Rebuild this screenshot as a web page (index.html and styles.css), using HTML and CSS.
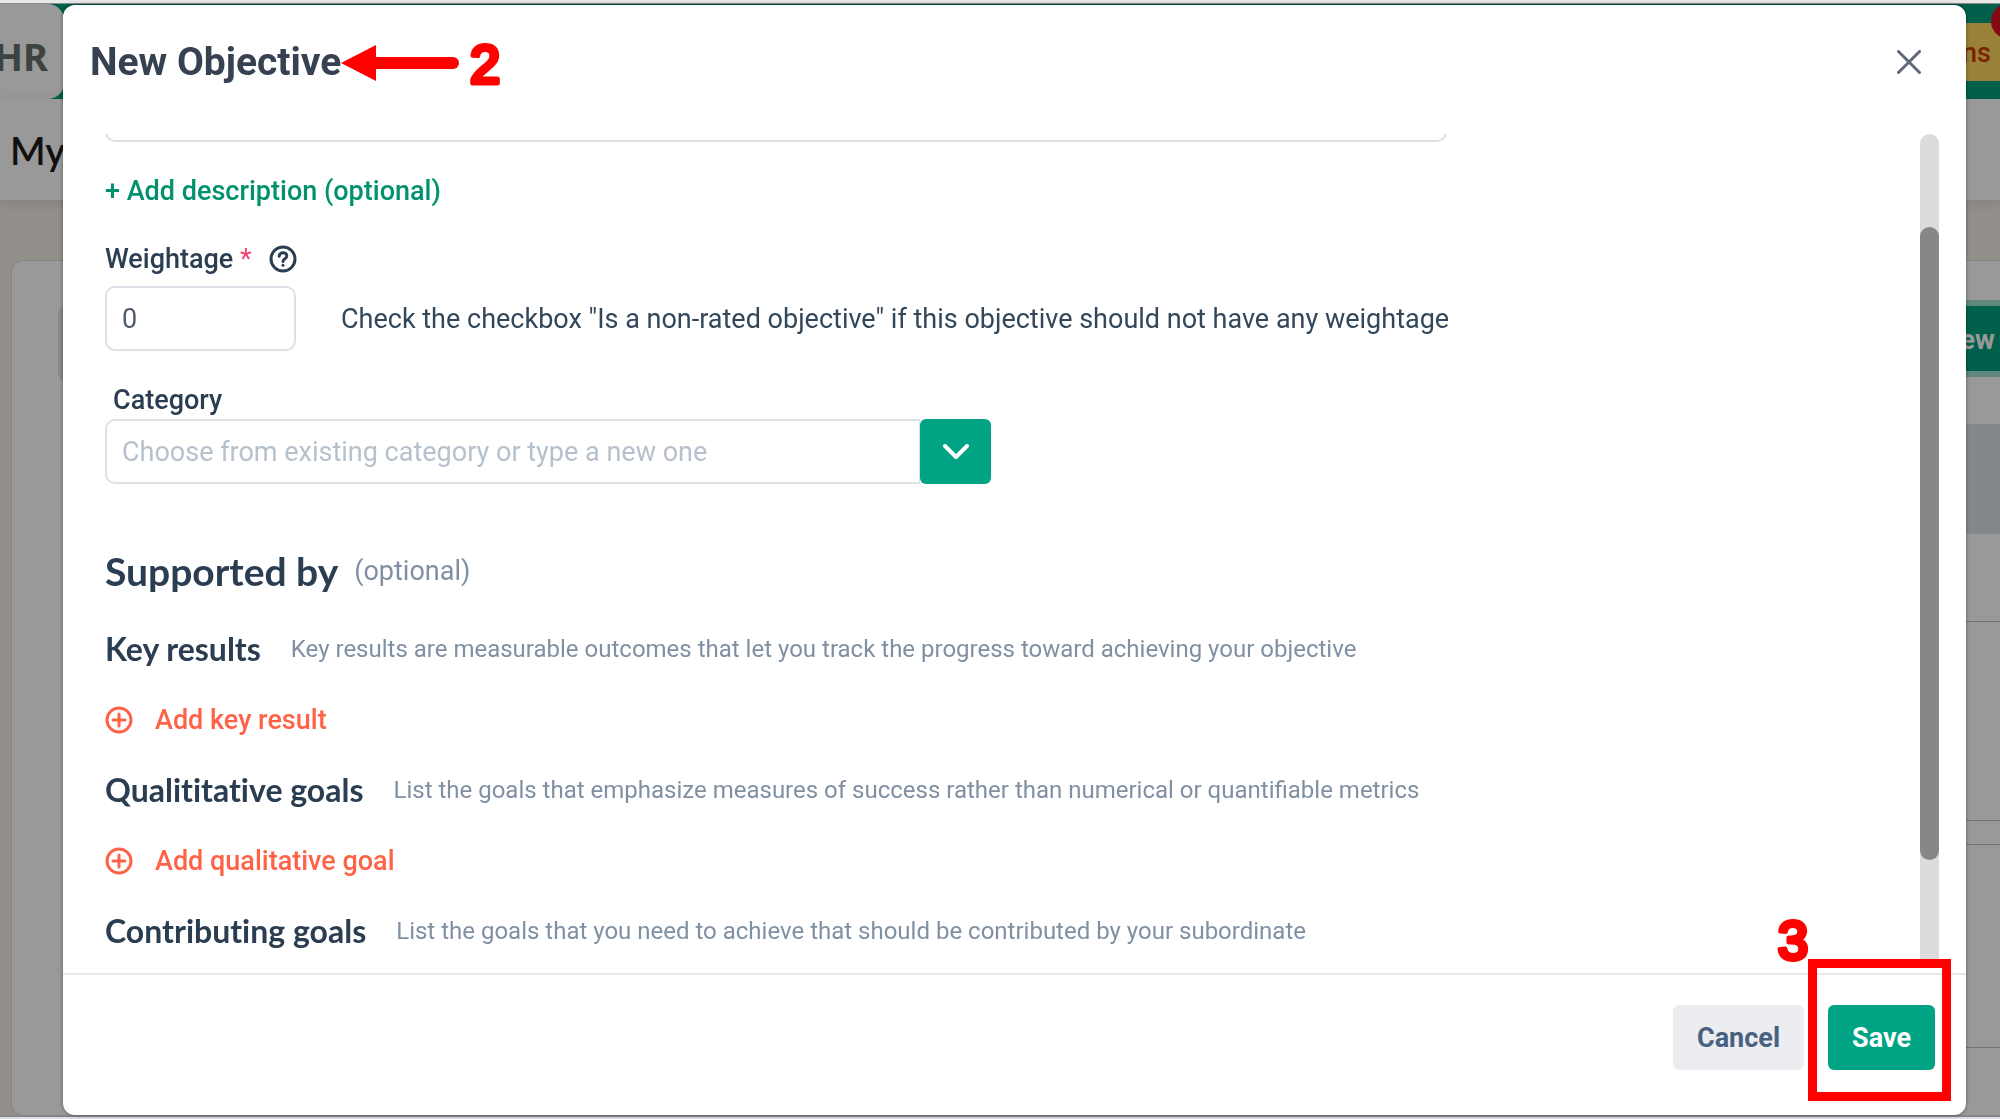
FILE: index.html
```html
<!DOCTYPE html>
<html lang="en">
<head>
<meta charset="utf-8">
<title>New Objective</title>
<meta name="viewport" content="width=device-width, initial-scale=1">
<link rel="stylesheet" href="styles.css">
</head>
<body>
<div class="app" aria-hidden="true">
  <header class="topbar">
    <div class="brand">HR</div>
    <div class="actions">Actions<span class="badge">1</span></div>
  </header>
  <div class="titlebar">My Objectives</div>
  <div class="card">
    <div class="toolbar"><span class="filter"></span><span class="new">+ New</span></div>
    <div class="thead"></div>
    <div class="line line-a"></div>
    <div class="line line-b"></div>
    <div class="line line-c"></div>
    <div class="line line-d"></div>
  </div>
</div>

<div class="backdrop">
  <section class="modal" role="dialog" aria-labelledby="dialog-title">
    <header class="modal-head">
      <div class="title-wrap">
        <h1 class="modal-title" id="dialog-title">New Objective</h1>
        <svg class="arrow" width="170" height="70" viewBox="0 0 170 70">
          <path class="arrow-fill" d="M0 30 35 12V48z"/>
          <path class="arrow-shaft" d="M34 30H112"/>
          <text class="step" x="129" y="50">2</text>
        </svg>
      </div>
      <button class="close" type="button" aria-label="Close">
        <svg width="24" height="24" viewBox="0 0 24 24"><path d="M1.500 1.500 22.500 22.500M22.500 1.500 1.500 22.500"/></svg>
      </button>
    </header>

    <div class="modal-body">
      <form class="fields" id="objective">
        <textarea class="box name" aria-label="Objective"></textarea>
        <button class="link-button" type="button">+ Add description (optional)</button>

        <div class="label-row">
          <label class="label" for="weight">Weightage <span class="required">*</span></label>
          <svg class="help" width="28" height="28" viewBox="0 0 28 28">
            <circle cx="14" cy="14" r="12"/>
            <path d="M10.200 11.300C10.200 6.500 17.800 6.700 17.800 11C17.800 13.700 14 13.700 14 16.400"/>
            <path d="M14 20.200V20.300"/>
          </svg>
        </div>
        <div class="weight-row">
          <input class="box weight" id="weight" type="text" value="0">
          <span class="hint">Check the checkbox "Is a non-rated objective" if this objective should not have any weightage</span>
        </div>

        <label class="label category-label" for="category">Category</label>
        <div class="combo">
          <input class="box category" id="category" type="text" placeholder="Choose from existing category or type a new one">
          <button class="combo-button" type="button" aria-label="Show categories">
            <svg width="28" height="18" viewBox="0 0 28 18"><path d="M3 3 14 14 25 3"/></svg>
          </button>
        </div>

        <div class="support-head"><h2 class="support-title">Supported by</h2><span class="optional">(optional)</span></div>

        <div class="goal-head"><h3 class="goal-title">Key results</h3><span class="goal-text">Key results are measurable outcomes that let you track the progress toward achieving your objective</span></div>
        <button class="add" type="button">
          <svg width="28" height="28" viewBox="0 0 28 28"><circle cx="14" cy="14" r="12"/><path d="M14 8V20M8 14H20"/></svg>Add key result
        </button>

        <div class="goal-head"><h3 class="goal-title">Qualititative goals</h3><span class="goal-text">List the goals that emphasize measures of success rather than numerical or quantifiable metrics</span></div>
        <button class="add" type="button">
          <svg width="28" height="28" viewBox="0 0 28 28"><circle cx="14" cy="14" r="12"/><path d="M14 8V20M8 14H20"/></svg>Add qualitative goal
        </button>

        <div class="goal-head"><h3 class="goal-title">Contributing goals</h3><span class="goal-text">List the goals that you need to achieve that should be contributed by your subordinate</span></div>
      </form>
      <div class="track"><div class="thumb"></div></div>
    </div>

    <footer class="modal-foot">
      <button class="button cancel" type="button">Cancel</button>
      <div class="save-wrap">
        <button class="button save" type="submit" form="objective">Save</button>
        <span class="frame"></span>
        <svg class="three" width="40" height="60" viewBox="0 0 40 60"><text class="step" x="4" y="50">3</text></svg>
      </div>
    </footer>
  </section>
</div>
</body>
</html>
```
FILE: styles.css
```css
* { box-sizing: border-box; }

body {
  margin: 0;
  height: 100vh;
  overflow: hidden;
  background: #dcdde6;
  font-family: Roboto, "Liberation Sans", sans-serif;
  font-size: 27px;
  line-height: 32px;
  color: #33475b;
}

button, input, textarea { font: inherit; }
h1, h2, h3 { margin: 0; }
button { border: 0; padding: 0; cursor: pointer; }

/* Page behind the dialog */
.app {
  height: calc(100vh - 3px);
  display: flex;
  flex-direction: column;
  border-top: 4px solid #e8e8e8;
  background: #f4efe8;
  overflow: hidden;
}
.topbar {
  flex: none;
  height: 95px;
  display: flex;
  align-items: center;
  justify-content: space-between;
  background: #00a17d;
}
.brand {
  width: 64px;
  height: 95px;
  padding: 8px 16px 0 0;
  display: flex;
  align-items: center;
  justify-content: flex-end;
  border-radius: 0 16px 16px 0;
  background: #fff;
  font-family: "Noto Sans", sans-serif;
  font-size: 38px;
  font-weight: 700;
  color: #66726c;
}
.actions {
  position: relative;
  height: 58px;
  padding: 0 9px 0 24px;
  background: #ffd95e;
  color: #cf3c00;
  font-weight: 500;
  line-height: 60px;
}
.badge {
  position: absolute;
  top: -20px;
  right: -27px;
  width: 36px;
  height: 36px;
  border-radius: 50%;
  background: #e01026;
  color: #fff;
  font-size: 20px;
  line-height: 30px;
  text-align: center;
}
.titlebar {
  flex: none;
  height: 102px;
  padding: 0 10px;
  background: #fff;
  border-bottom: 1px solid #ddd;
  box-shadow: 0 2px 12px rgba(0, 0, 0, .1);
  font-family: Lato, sans-serif;
  font-size: 38px;
  font-weight: 600;
  line-height: 102px;
  color: #1c1c1c;
}
.card {
  flex: 1;
  margin: 59px -20px 0 11px;
  background: #fff;
  border: 1px solid #dcdcdc;
  border-radius: 12px;
}
.toolbar {
  display: flex;
  justify-content: space-between;
  margin: 45px 0 0 46px;
  padding-right: 5px;
  height: 65px;
}
.filter { width: 60px; height: 75px; border-radius: 8px; background: #e2e5ea; }
.new {
  width: 130px;
  padding-left: 36px;
  background: #00a17d;
  box-shadow: 0 0 0 6px #9ee5d3;
  color: #fff;
  font-weight: 700;
  line-height: 68px;
}
.thead, .line { margin-left: 60px; }
.thead { height: 110px; margin-top: 53px; background: #dce3e6; }
.line { height: 1px; background: #b7bfca; }
.line-a { margin-top: 87px; }
.line-b { margin-top: 198px; }
.line-c { margin-top: 23px; }
.line-d { margin-top: 202px; }

/* Dialog */
.backdrop {
  position: fixed;
  inset: 3px 0 2px;
  padding: 2px 34px 2px 63px;
  display: flex;
  background: rgba(0, 0, 0, .4);
}
.modal {
  flex: 1;
  min-width: 0;
  display: flex;
  flex-direction: column;
  border-radius: 12px;
  background: #fff;
  box-shadow: 0 0 4px rgba(0, 0, 0, .4);
}
.modal-head {
  flex: none;
  height: 129px;
  padding: 34px 45px 0 27px;
  display: flex;
  align-items: flex-start;
  justify-content: space-between;
}
.title-wrap { position: relative; }
.modal-title {
  font-size: 39px;
  font-weight: 700;
  line-height: 46px;
  color: #364152;
}
.arrow { position: absolute; left: 100%; top: -6px; }
.arrow-fill { fill: #f00; }
.arrow-shaft { stroke: #f00; stroke-width: 12; stroke-linecap: round; }
.step {
  font-family: "Liberation Sans", Arial, sans-serif;
  font-size: 54px;
  fill: #f00;
  stroke: #f00;
  stroke-width: 5px;
  stroke-linejoin: round;
}
.close { margin-top: 11px; height: 24px; background: none; }
.close svg { display: block; fill: none; stroke: #5f6878; stroke-width: 3; stroke-linecap: round; }

.modal-body {
  flex: 1;
  min-height: 0;
  padding: 0 27px 0 42px;
  display: flex;
  justify-content: space-between;
  overflow: hidden;
}
.fields { flex: 1; display: flex; flex-direction: column; align-items: flex-start; }
.fields > * { flex: none; }
.box {
  height: 65px;
  padding: 0 15px;
  border: 2px solid #dde1e7;
  border-radius: 10px;
  background: #fff;
  color: #4f5b6b;
  outline: 0;
}
/* Scrolled up so that only its lower edge shows */
.name { width: 1342px; max-width: 100%; margin-top: -57px; resize: none; }
.link-button { margin-top: 33px; background: none; color: #00926f; font-weight: 500; }
.label-row { margin-top: 36px; display: flex; align-items: center; gap: 17px; }
.label { color: #2b3e51; font-weight: 500; }
.required { color: #f2416a; font-weight: 400; }
.help, .add svg { fill: none; stroke: currentColor; stroke-width: 3; stroke-linecap: round; }
.help { color: #2b3e51; }
.weight-row { margin-top: 11px; display: flex; align-items: center; gap: 45px; }
.weight { width: 191px; }
.category-label { margin: 33px 0 0 8px; }
.combo { margin-top: 3px; width: 886px; max-width: 100%; display: flex; }
.category { flex: 1; min-width: 0; border-right-width: 1px; border-radius: 10px 0 0 10px; }
.category::placeholder { color: #b6c1cd; opacity: 1; }
.combo-button {
  width: 71px;
  height: 65px;
  display: flex;
  align-items: center;
  justify-content: center;
  border-radius: 6px;
  background: #00a383;
}
.combo-button svg { fill: none; stroke: #fff; stroke-width: 4; stroke-linecap: round; stroke-linejoin: round; }

.support-title, .goal-title {
  font-family: Lato, sans-serif;
  font-weight: 700;
  font-variant-ligatures: none;
  color: #2b3e51;
}
.support-head { margin-top: 63px; display: flex; align-items: center; gap: 16px; line-height: 48px; }
.support-title { font-size: 39px; }
.optional, .goal-text { color: #8090a3; }
.goal-head { margin-top: 34px; display: flex; align-items: center; gap: 30px; line-height: 40px; }
.goal-title { font-size: 32px; }
.goal-text { font-size: 24px; }
.add {
  margin-top: 35px;
  display: flex;
  align-items: center;
  gap: 22px;
  background: none;
  color: #ff6347;
  font-weight: 500;
}

.track { flex: none; width: 19px; margin-bottom: 10px; padding-top: 93px; border-radius: 10px 10px 0 0; background: #dcdcdc; }
.thumb { height: 86%; max-height: 634px; border-radius: 10px; background: #878787; }

.modal-foot {
  flex: none;
  height: 142px;
  padding: 30px 31px 0;
  display: flex;
  justify-content: flex-end;
  gap: 24px;
  border-top: 2px solid #e6e8ef;
}
.button { height: 65px; padding: 0 24px; border-radius: 6px; font-weight: 700; }
.cancel { background: #ebedf1; color: #4a6080; }
.save { background: #00a383; color: #fff; }
.save-wrap { position: relative; height: 65px; }
.frame { position: absolute; inset: -46px -16px -31px -20px; border: 9px solid #f00; pointer-events: none; }
.three { position: absolute; left: -54px; top: -96px; }
```
